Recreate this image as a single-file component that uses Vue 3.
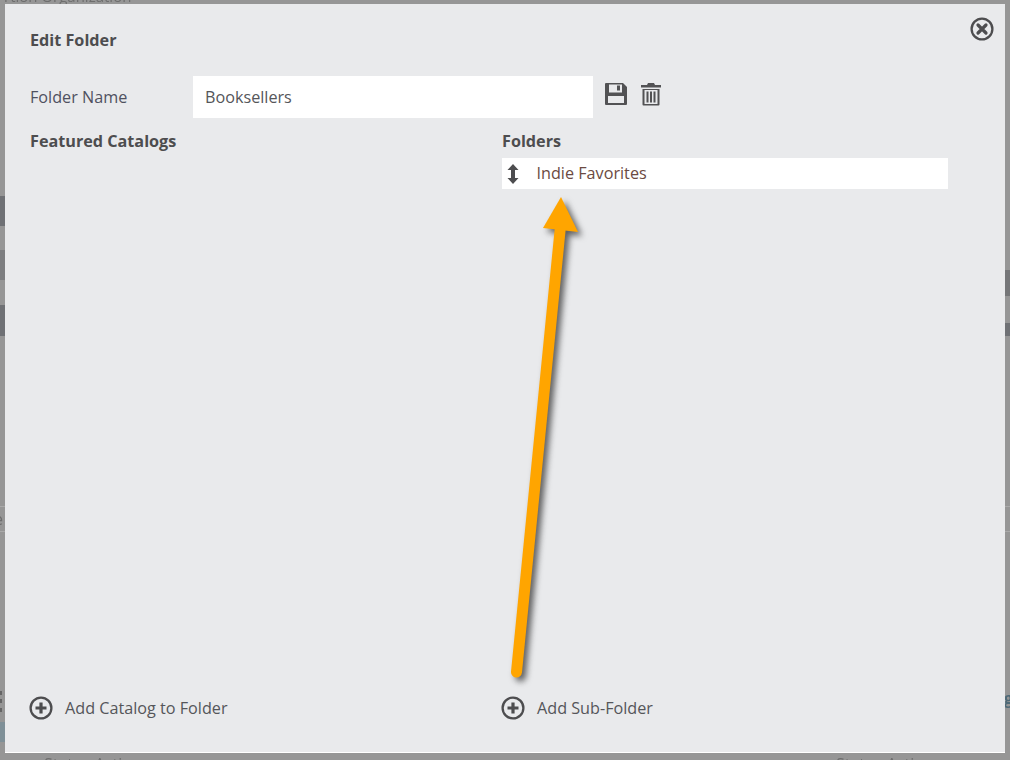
<script setup>
const strips = [
  { left: 0, top: 196, width: 5, height: 30, background: '#6f7175' },
  { left: 0, top: 250, width: 5, height: 30, background: '#7d7e80' },
  { left: 0, top: 305, width: 5, height: 31, background: '#6f7175' },
  { left: 1005, top: 270, width: 5, height: 26, background: '#757678' },
  { left: 1005, top: 323, width: 5, height: 13, background: '#6f7175' },
  { left: 0, top: 722, width: 5, height: 20, background: '#7f9098' },
  { left: 0, top: 691, width: 2, height: 4, background: '#666' },
  { left: 0, top: 699, width: 2, height: 4, background: '#666' },
  { left: 0, top: 708, width: 2, height: 4, background: '#666' },
]
const strokeLines = [
  { left: 0, top: 506, width: 5, height: 1, background: '#aaa' },
  { left: 0, top: 531, width: 5, height: 1, background: '#aaa' },
  { left: 1005, top: 506, width: 5, height: 1, background: '#aaa' },
  { left: 1005, top: 531, width: 5, height: 1, background: '#aaa' },
]
const px = (o) => ({
  left: o.left + 'px', top: o.top + 'px', width: o.width + 'px', height: o.height + 'px', background: o.background,
})
</script>

<template>
  <div class="page">
    <div class="backdrop">
      <span v-for="(s, i) in [...strips, ...strokeLines]" :key="i" class="strip" :style="px(s)"></span>
      <span class="ghost ghost-top">rtion Organization</span>
      <span class="ghost ghost-e">e</span>
      <span class="ghost ghost-g">g</span>
      <span class="ghost ghost-status-a">Status Active</span>
      <span class="ghost ghost-status-b">Status Active</span>
    </div>

    <section class="modal">
      <button class="close" aria-label="Close">
        <svg width="24" height="24" viewBox="0 0 24 24">
          <circle cx="12" cy="12" r="10.4" fill="none" stroke="#4d4d4f" stroke-width="2.3" />
          <path d="M8 8l8 8M16 8l-8 8" stroke="#4d4d4f" stroke-width="3.2" stroke-linecap="round" />
        </svg>
      </button>

      <h2 class="title">Edit Folder</h2>

      <div class="name-row">
        <label class="name-label">Folder Name</label>
        <div class="name-input">Booksellers</div>
        <svg class="save" width="24" height="24" viewBox="0 0 24 24">
          <path fill="#525254" fill-rule="evenodd" d="M2 1h17l4 4v17a1 1 0 0 1-1 1H2a1 1 0 0 1-1-1V2a1 1 0 0 1 1-1zM5 2.500v8h13v-8zM4 14v7h16v-7zM13 3.500h3v5h-3z" />
        </svg>
        <svg class="trash" width="22" height="24" viewBox="0 0 22 24">
          <path fill="#525254" fill-rule="evenodd" d="M8 1h6l1 2h6v2.400H1V3h6zM2.500 7h17v15.500a1 1 0 0 1-1 1h-15a1 1 0 0 1-1-1zM4.500 8v14h13V8zM6.500 9.500h2v11h-2zM10 9.500h2v11h-2zM13.500 9.500h2v11h-2z" />
        </svg>
      </div>

      <div class="columns">
        <div class="col">
          <h3 class="heading">Featured Catalogs</h3>
          <div class="spacer"></div>
          <div class="add">
            <svg width="24" height="24" viewBox="0 0 24 24">
              <circle cx="12" cy="12" r="10.4" fill="none" stroke="#4d4d4f" stroke-width="2.3" />
              <path d="M6.500 12h11M12 6.500v11" stroke="#4d4d4f" stroke-width="3.200" />
            </svg>
            <span>Add Catalog to Folder</span>
          </div>
        </div>
        <div class="col">
          <h3 class="heading">Folders</h3>
          <div class="item">
            <svg class="sort" width="12" height="22" viewBox="0 0 12 22">
              <path fill="#4d4d4f" d="M6 1l5.500 6H8v8h3.500L6 21 .5 15H4V7H.5z" />
            </svg>
            <span class="item-text">Indie Favorites</span>
          </div>
          <div class="spacer"></div>
          <div class="add add-sub">
            <svg width="24" height="24" viewBox="0 0 24 24">
              <circle cx="12" cy="12" r="10.4" fill="none" stroke="#4d4d4f" stroke-width="2.3" />
              <path d="M6.500 12h11M12 6.500v11" stroke="#4d4d4f" stroke-width="3.200" />
            </svg>
            <span>Add Sub-Folder</span>
          </div>
        </div>
      </div>

      <svg class="arrow" width="90" height="500" viewBox="0 0 90 500">
        <path d="M11.500 476 L55.500 30" stroke="#ffa500" stroke-width="11" stroke-linecap="round" fill="none" />
        <path d="M56 1 L73 36 L38 32 Z" fill="#ffa500" />
      </svg>
    </section>
  </div>
</template>

<style scoped>
.page {
  position: relative;
  width: 1010px;
  height: 760px;
  overflow: hidden;
  background: #969696;
  font-family: "Open Sans", "Noto Sans", sans-serif;
  font-size: 16.2px;
}
.backdrop {
  position: absolute;
  inset: 0;
}
.strip {
  position: absolute;
  filter: blur(0.6px);
}
.ghost {
  position: absolute;
  color: #6e6e6e;
  font-size: 16px;
  line-height: 20px;
  filter: blur(0.6px);
  white-space: nowrap;
}
.ghost-top { left: 4px; top: -14px; font-size: 15px; }
.ghost-e { left: -6px; top: 509px; }
.ghost-g { left: 1004px; top: 688px; color: #4f6a78; font-weight: 700; }
.ghost-status-a { left: 44px; top: 754px; }
.ghost-status-b { left: 836px; top: 754px; }

.modal {
  position: absolute;
  left: 5px;
  top: 4px;
  box-sizing: border-box;
  width: 1000px;
  height: 749px;
  padding: 0 25px;
  background: #e9eaec;
  border-bottom: 1.5px solid #fff;
  color: #4d4d4f;
  display: flex;
  flex-direction: column;
}
.close {
  position: absolute;
  top: 13px;
  right: 11px;
  padding: 0;
  border: 0;
  background: none;
  display: flex;
}
.title {
  margin: 25px 0 0;
  font-size: 16.2px;
  line-height: 22px;
  font-weight: 700;
}
.name-row {
  display: flex;
  align-items: center;
  margin-top: 25px;
}
.name-label {
  width: 163px;
  color: #4f5160;
  line-height: 42px;
}
.name-input {
  box-sizing: border-box;
  width: 400px;
  height: 42px;
  padding: 0 12px;
  background: #fff;
  line-height: 42px;
  color: #55565a;
}
.save {
  margin: -7px 0 0 11px;
}
.trash {
  margin: -7px 0 0 12px;
}
.columns {
  flex: 1;
  display: grid;
  grid-template-columns: 472px 446px;
  min-height: 0;
}
.col {
  display: flex;
  flex-direction: column;
}
.heading {
  margin: 12px 0 0;
  font-size: 16.2px;
  line-height: 22px;
  font-weight: 700;
}
.item {
  display: flex;
  align-items: center;
  height: 31px;
  margin-top: 6px;
  background: #fff;
  color: #6b4a42;
}
.item-text {
  line-height: 28px;
  padding-bottom: 2px;
}
.sort {
  margin-left: 5px;
  margin-right: 17.5px;
}
.spacer {
  flex: 1;
}
.add {
  display: flex;
  align-items: center;
  gap: 11px;
  height: 24px;
  margin-bottom: 32px;
  color: #55565a;
}
.add svg {
  margin-left: -1px;
  margin-right: 1px;
}
.arrow {
  position: absolute;
  left: 500px;
  top: 192px;
  overflow: visible;
  filter: drop-shadow(4px 4px 3px rgba(50, 50, 50, 0.75));
}
</style>
